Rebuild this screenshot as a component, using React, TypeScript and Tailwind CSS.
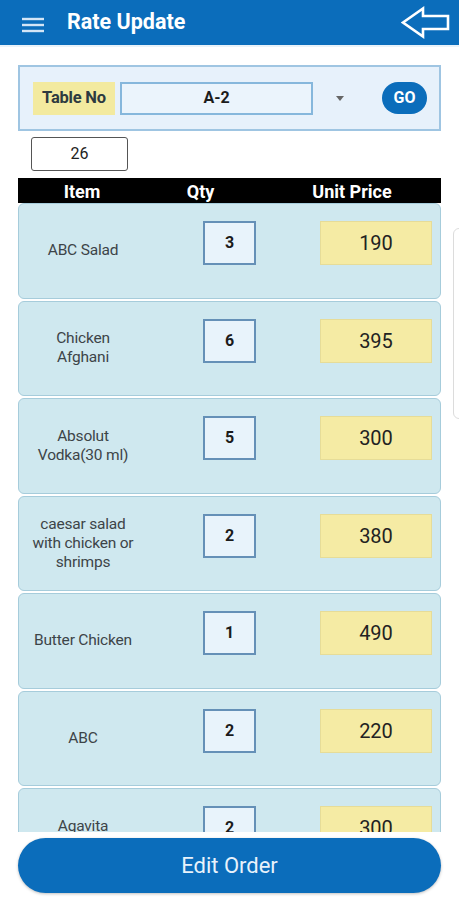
type Row = { item: string; qty: number; price: number; lift?: boolean };

const rows: Row[] = [
  { item: "ABC Salad", qty: 3, price: 190 },
  { item: "Chicken Afghani", qty: 6, price: 395 },
  { item: "Absolut Vodka(30 ml)", qty: 5, price: 300 },
  { item: "caesar salad with chicken or shrimps", qty: 2, price: 380 },
  { item: "Butter Chicken", qty: 1, price: 490 },
  { item: "ABC", qty: 2, price: 220 },
  // last row is cut by the footer, its label sits a line higher
  { item: "Agavita", qty: 2, price: 300, lift: true },
];

function Hamburger() {
  return (
    <svg width="22" height="16" viewBox="0 0 22 16">
      <g stroke="#d3e5f6" strokeWidth="2.4">
        <line x1="0" y1="2" x2="22" y2="2" />
        <line x1="0" y1="8" x2="22" y2="8" />
        <line x1="0" y1="14" x2="22" y2="14" />
      </g>
    </svg>
  );
}

function BackArrow() {
  return (
    <svg width="50" height="34" viewBox="0 0 50 34" fill="none">
      <path
        d="M2 16.5 L22 2.5 L22 10 L47 10 L47 23 L22 23 L22 30.5 Z"
        stroke="white"
        strokeWidth="2.6"
        strokeLinejoin="miter"
      />
    </svg>
  );
}

export default function App() {
  return (
    <div className="relative flex h-[900px] w-[459px] flex-col overflow-hidden bg-white font-['Roboto',sans-serif]">
      <header className="flex h-[45px] shrink-0 items-center bg-[#0b6dbb] pl-[22px] pr-[8px]">
        <div className="mt-[4px]">
          <Hamburger />
        </div>
        <h1 className="ml-[23px] text-[21.5px] font-bold text-white">Rate Update</h1>
        <div className="ml-auto mt-[1px]">
          <BackArrow />
        </div>
      </header>
      <div className="h-[2px] shrink-0 bg-[#e9f2f9]" />

      <main className="flex flex-1 flex-col overflow-hidden px-[18px] pt-[18px]">
        <div className="flex h-[66px] shrink-0 items-center border-2 border-[#9fc5e2] bg-[#e7f1fb] pl-[13px] pr-[12px]">
          <div className="flex h-[33px] w-[82px] items-center justify-center bg-[#f3ea9f] text-[16.5px] font-bold tracking-[-0.2px] text-[#2d3a40]">
            Table No
          </div>
          <div className="ml-[5px] flex h-[33px] w-[193px] items-center justify-center border-2 border-[#86b7dc] bg-[#ebf4fc] text-[16px] font-bold text-[#1c1c1c]">
            A-2
          </div>
          <div className="ml-[23px] h-0 w-0 border-x-[4px] border-t-[5px] border-x-transparent border-t-[#666]" />
          <button className="ml-auto flex h-[32px] w-[45px] items-center justify-center rounded-full bg-[#0b6dbb] text-[16px] font-bold text-white">
            GO
          </button>
        </div>

        <div className="ml-[13px] mt-[6px] flex h-[34px] w-[97px] shrink-0 items-center justify-center rounded-[3px] border-[1.5px] border-[#555] bg-white text-[16px] text-[#222]">
          26
        </div>

        <div className="mt-[7px] grid h-[25px] shrink-0 grid-cols-[128px_109px_1fr] items-center bg-black text-[18px] font-bold text-white">
          <span className="text-center">Item</span>
          <span className="text-center">Qty</span>
          <span className="pl-[8px] text-center">Unit Price</span>
        </div>

        <div className="flex flex-col gap-[2px]">
          {rows.map((r) => (
            <div
              key={r.item}
              className="flex h-[95.5px] shrink-0 rounded-[6px] border-[1.5px] border-[#a6ccdb] bg-[#cfe8ef]"
            >
              <div
                className={
                  r.lift
                    ? "flex w-[128px] items-center justify-center px-[11px] pb-[19px] text-center text-[15.5px] leading-[19px] tracking-[-0.2px] text-[#3d4448]"
                    : "flex w-[128px] items-center justify-center px-[11px] text-center text-[15.5px] leading-[19px] tracking-[-0.2px] text-[#3d4448]"
                }
              >
                {r.item}
              </div>
              <div className="ml-[56px] mt-[17px] flex h-[44px] w-[53px] items-center justify-center border-2 border-[#6590b7] bg-[#e8f3fb] text-[16px] font-bold text-[#1b1b1b]">
                {r.qty}
              </div>
              <div className="ml-[64px] mt-[17px] flex h-[44px] w-[112px] items-center justify-center border border-[#e6dc98] bg-[#f5eba4] text-[20px] text-[#222]">
                {r.price}
              </div>
            </div>
          ))}
        </div>
      </main>

      <footer className="flex h-[68px] shrink-0 items-start bg-white px-[18px] pt-[6px]">
        <button className="flex h-[55px] w-full items-center justify-center rounded-full bg-[#0b6dbb] text-[22px] text-[#e8f2fb] shadow-[0_1px_3px_rgba(0,0,0,0.25)]">
          Edit Order
        </button>
      </footer>

      <div className="absolute left-[453px] top-[228px] h-[191px] w-[20px] rounded-[6px] border border-[#dcdcdc] bg-white" />
    </div>
  );
}
